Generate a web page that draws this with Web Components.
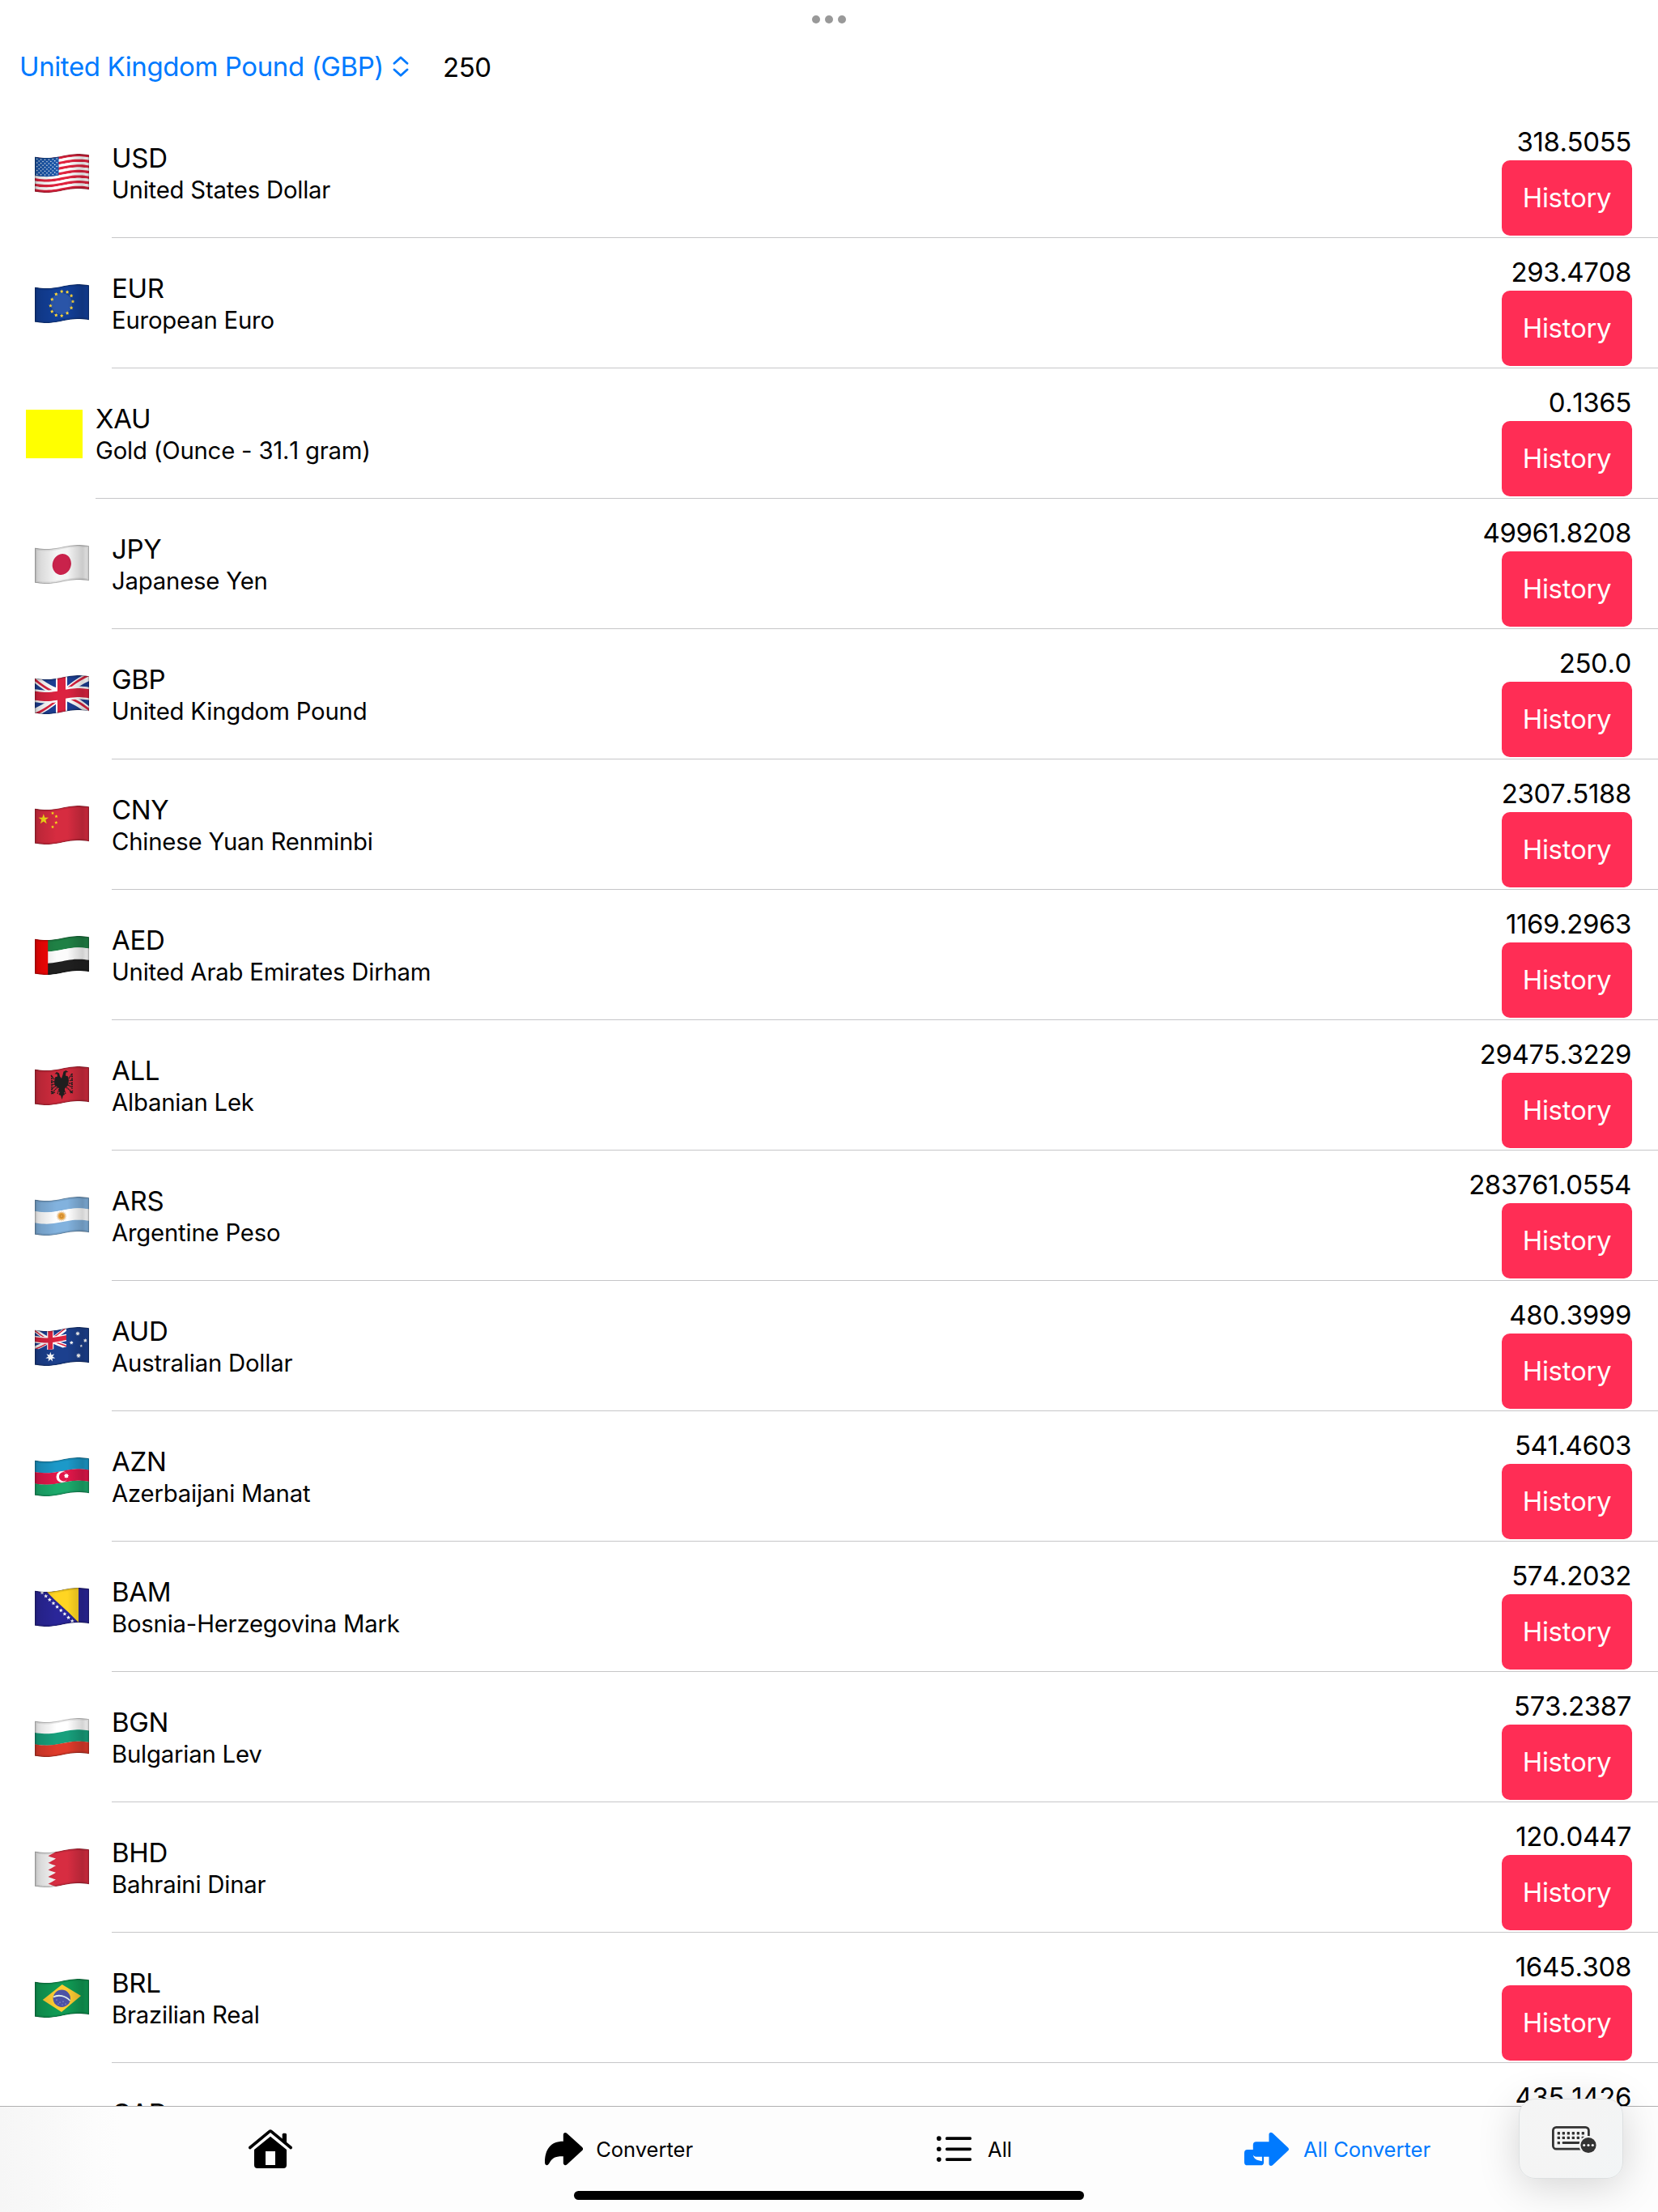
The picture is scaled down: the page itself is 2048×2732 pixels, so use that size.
<!DOCTYPE html>
<html lang="en">
<head>
<meta charset="utf-8">
<title>All Converter</title>
<style>
    html, body{margin: 0;height: 100%;background: #fff;}
    body{font-family: Inter, "Liberation Sans", sans-serif;color: #000;overflow: hidden;}
</style>
</head>
<body>
<converter-app></converter-app>

<script>
// ---------- flags ----------
const FLAG_W = 67;
const FLAG_H = 43;

// vertical offset of the cloth at x
function wave(x) {
    return 2.5 + 2.5 * Math.cos((x - 14) / 40 * Math.PI);
}

// polygon that follows the wave
function cloth(points, fill) {
    let out = [];
    for (let i = 0; i < points.length; i++) {
        let [x1, y1] = points[i];
        let [x2, y2] = points[(i + 1) % points.length];
        let steps = Math.max(1, Math.ceil(Math.abs(x2 - x1) / 3));
        for (let s = 0; s < steps; s++) {
            let x = x1 + (x2 - x1) * s / steps;
            let y = y1 + (y2 - y1) * s / steps;
            out.push(x.toFixed(2) + "," + (y + wave(x)).toFixed(2));
        }
    }
    return `<polygon points="${out.join(" ")}" fill="${fill}"/>`;
}

function box(x, y, w, h, fill) {
    return cloth([[x, y], [x + w, y], [x + w, y + h], [x, y + h]], fill);
}

function star(cx, cy, r, fill, n = 5, inner = 0.4) {
    let pts = [];
    for (let i = 0; i < n * 2; i++) {
        let a = Math.PI * i / n - Math.PI / 2;
        let k = i % 2 ? r * inner : r;
        pts.push((cx + k * Math.cos(a)).toFixed(2) + "," + (cy + k * Math.sin(a)).toFixed(2));
    }
    return `<polygon points="${pts.join(" ")}" fill="${fill}"/>`;
}

function bands(colors, x = 0) {
    let h = FLAG_H / colors.length;
    return colors.map((c, i) => box(x, i * h, FLAG_W - x, h + 0.1, c)).join("");
}

function unionJack(w, h) {
    let sx = w / 67, sy = h / 43;
    let p = (pts, c) => cloth(pts.map(([x, y]) => [x * sx, y * sy]), c);
    return p([[0, 0], [67, 0], [67, 43], [0, 43]], "#1d3f94")
        + p([[0, 0], [8, 0], [67, 37], [67, 43], [59, 43], [0, 6]], "#fff")
        + p([[67, 0], [59, 0], [0, 37], [0, 43], [8, 43], [67, 6]], "#fff")
        + p([[0, 0], [22, 14], [17, 14], [0, 3.5]], "#dc2340")
        + p([[67, 0], [62, 0], [40, 14], [45, 14]], "#dc2340")
        + p([[67, 43], [67, 39.5], [49, 29], [44, 29]], "#dc2340")
        + p([[0, 43], [5, 43], [27, 29], [22, 29]], "#dc2340")
        + p([[26, 0], [40, 0], [40, 43], [26, 43]], "#fff")
        + p([[0, 13.5], [67, 13.5], [67, 29.5], [0, 29.5]], "#fff")
        + p([[28, 0], [38, 0], [38, 43], [28, 43]], "#dc2340")
        + p([[0, 16], [67, 16], [67, 27], [0, 27]], "#dc2340");
}

const FLAGS = {
    us() {
        let s = "";
        for (let i = 0; i < 13; i++) s += box(0, i * FLAG_H / 13, FLAG_W, FLAG_H / 13 + 0.05, i % 2 ? "#fff" : "#e0233e");
        s += box(0, 0, 29.5, FLAG_H / 13 * 7, "#1d58aa");
        for (let r = 0; r < 9; r++)
            for (let c = r % 2; c < 11; c += 2)
                s += `<circle cx="${2.7 + c * 2.45}" cy="${2.3 + r * 2.35 + wave(2.7 + c * 2.45)}" r=".72" fill="#fff"/>`;
        return s;
    },
    eu() {
        let s = box(0, 0, FLAG_W, FLAG_H, "#123f98") + `<circle cx="33" cy="24" r="13" fill="#2a55a8"/>`;
        for (let i = 0; i < 12; i++) {
            let a = i * Math.PI / 6;
            let x = 33.2 + 13.8 * Math.sin(a);
            s += star(x, 24 - 15 * Math.cos(a) - 2.6 * Math.sin(a), 2.4, "#fbd43a", 5, 0.5);
        }
        return s;
    },
    jp() {
        return box(0, 0, FLAG_W, FLAG_H, "#f4f4f4")
            + `<ellipse cx="33.3" cy="24" rx="11.4" ry="13.1" fill="#c9224b" transform="rotate(18 33.3 24)"/>`;
    },
    gb() { return unionJack(67, 43); },
    cn() {
        return box(0, 0, FLAG_W, FLAG_H, "#d62c40")
            + star(10.8, 16.8, 6.6, "#f7e017") + star(22, 9.3, 2.1, "#f7e017", 5, 0.5) + star(26.5, 13.3, 2.1, "#f7e017", 5, 0.5)
            + star(26.3, 21, 2.1, "#f7e017", 5, 0.5) + star(22, 26.3, 2.1, "#f7e017", 5, 0.5);
    },
    ae() { return bands(["#1f8145", "#fbfbfb", "#202020"], 16) + box(0, 0, 16.2, FLAG_H, "#f60505"); },
    al() {
        return box(0, 0, FLAG_W, FLAG_H, "#cf2b3d") + `<g stroke="#1e1e1e" fill="none" stroke-width="1.3">
            <path fill="#1e1e1e" stroke="none" d="M33 15l-2-2.5-1-4-3-1.5-2.5 2.5 3 0 .5 3-3 1-1 6 1 4 5 4 0 4 2 1.5h3l2-1.5 0-4 4-4 1-6-1-5-3-1 .5-4 3-.5-3-2-3 1.5-1 4z"/>
            <path d="M24 16l-4-5M24 19h-4M25 22l-5 1M26 24l-5 4M28 26l-6 6M30 28l-2 6M42 15l4-6M43 18l4-2M42 21l5 0M41 23l5 3M39 26l6 5M36 28l2 6" stroke-dasharray="1.8 .5"/>
            <path d="M21 12v19M46 9v19" stroke-width="2" stroke-dasharray="1.3 1.3"/>
            <path d="M20 31l3 3M47 30l-3 3M20 34l5-2M47 33l-4-2"/>
            <path fill="#1e1e1e" stroke="none" d="M32 29h3l2 6-2 1-1.5 5-1.5-5-2.5-1z"/></g>`;
    },
    ar() {
        return bands(["#82b2de", "#fff", "#82b2de"]) + star(33, 24, 6.6, "#e9c9a0", 16, 0.75)
            + `<circle cx="33" cy="24" r="3.9" fill="#e9a23a"/><circle cx="33" cy="24" r="2" fill="none" stroke="#b9772a" stroke-width=".8"/>`;
    },
    au() {
        return box(0, 0, FLAG_W, FLAG_H, "#1c408e") + unionJack(39, 23)
            + star(19.3, 37, 6.2, "#fff", 7, 0.45) + star(53, 8, 3, "#fff", 7, 0.5) + star(45.3, 19.3, 2.6, "#fff", 7, 0.5)
            + star(62.3, 16.7, 2.6, "#fff", 7, 0.5) + star(57.3, 23.3, 1.8, "#fff", 5, 0.5) + star(54, 35.3, 3.2, "#fff", 7, 0.5);
    },
    az() {
        return bands(["#1c99c9", "#e2174a", "#1caa6c"])
            + `<circle cx="33.5" cy="24" r="7" fill="#fff"/><circle cx="35.6" cy="23.7" r="5.7" fill="#e2174a"/>` + star(39, 22.8, 3.3, "#fff", 8, 0.6);
    },
    ba() {
        let s = box(0, 0, FLAG_W, FLAG_H, "#2a2699") + cloth([[15, 0], [54, 0], [54, 43]], "#ffd522");
        for (let i = 0; i < 9; i++) s += star(9 + i * 4.65, 6 + i * 4.4, 2.6, "#fff", 5, 0.45);
        return s;
    },
    bg() { return bands(["#fff", "#17a07c", "#df3b2b"]); },
    bh() {
        let pts = [[FLAG_W, 0], [26, 0]];
        for (let i = 0; i < 5; i++) pts.push([16.5, (i + 0.5) * FLAG_H / 5], [26, (i + 1) * FLAG_H / 5]);
        pts.push([FLAG_W, FLAG_H]);
        return box(0, 0, FLAG_W, FLAG_H, "#f4f4f4") + cloth(pts, "#d72d41");
    },
    br() {
        return box(0, 0, FLAG_W, FLAG_H, "#109a54")
            + `<polygon points="9.7,26 33.7,7 57,21 33,41" fill="#fccb32"/>
            <circle cx="33.3" cy="24.3" r="10.7" fill="#4c53a6"/>
            <path d="M23 22.5C29 19 38 21 43.5 27" fill="none" stroke="#dff0ea" stroke-width="1.8"/>
            <g fill="#c9cdf0"><circle cx="27" cy="26" r=".6"/><circle cx="31" cy="29" r=".6"/><circle cx="35" cy="28" r=".6"/><circle cx="38" cy="31" r=".6"/><circle cx="29" cy="31" r=".5"/><circle cx="34" cy="32" r=".5"/></g>`;
    }
};

class FlagIcon extends HTMLElement {
    constructor() {
        super();
        this.attachShadow({ mode: 'open' });
    }
    connectedCallback() {
        let code = this.getAttribute("code");
        let outline = cloth([[0, 0], [FLAG_W, 0], [FLAG_W, FLAG_H], [0, FLAG_H]], "#000").match(/points="([^"]+)"/)[1];
        this.shadowRoot.innerHTML = `
            <style>
                :host{display: block;width: 67px;height: 48px;}
                svg{display: block;}
            </style>
            <svg width="67" height="48" viewBox="0 0 67 48">
                <defs>
                    <clipPath id="c"><polygon points="${outline}"/></clipPath>
                    <linearGradient id="g">
                        <stop offset="0" stop-opacity=".18"/>
                        <stop offset=".12" stop-opacity=".1"/>
                        <stop offset=".4" stop-opacity="0"/>
                        <stop offset=".6" stop-opacity="0"/>
                        <stop offset=".88" stop-opacity=".17"/>
                        <stop offset="1" stop-opacity=".06"/>
                    </linearGradient>
                </defs>
                <g clip-path="url(#c)">
                    ${FLAGS[code]()}
                    <rect width="67" height="48" fill="url(#g)"/>
                    <polygon points="${outline}" fill="none" stroke="#000" stroke-opacity=".08" stroke-width="5"/>
                    <polygon points="${outline}" fill="none" stroke="#000" stroke-opacity=".2" stroke-width="2"/>
                </g>
            </svg>`;
    }
}
customElements.define('flag-icon', FlagIcon);

// ---------- history button ----------
const history_button = document.createElement('template');
history_button.innerHTML = `
    <style>
        :host{display: flex;align-items: center;justify-content: center;box-sizing: border-box;width: 161px;height: 93px;padding-bottom: 2px;border-radius: 10px;background: #ff2d55;color: #fff;font-size: 33px;line-height: 40px;letter-spacing: var(--ls-body);}
    </style>
    <slot></slot>
`;

class HistoryButton extends HTMLElement {
    constructor() {
        super();
        this.attachShadow({ mode: 'open' });
        this.shadowRoot.appendChild(history_button.content.cloneNode(true));
    }
}
customElements.define('history-button', HistoryButton);

// ---------- currency row ----------
const currency_row = document.createElement('template');
currency_row.innerHTML = `
    <style>
        :host{display: flex;height: 161px;flex: none;padding-left: 32px;}
        .icon{flex: none;box-sizing: border-box;width: 90px;padding-right: 1px;margin-right: 16px;display: flex;align-items: center;justify-content: center;}
        .icon.gold{width: 70px;padding: 0;}
        .gold i{display: block;width: 70px;height: 60px;background: #ff0;}
        .content{flex: 1;display: flex;justify-content: space-between;border-bottom: 1px solid #c6c6c8;padding-right: 32px;}
        .names{padding-top: 42px;}
        .code{font-size: 33px;line-height: 40px;letter-spacing: var(--ls-body);}
        .name{font-size: 29.3px;line-height: 36px;margin-top: 2px;letter-spacing: var(--ls-sub);}
        :host([flag="gold"]) .name{font-kerning: none;}
        .right{display: flex;flex-direction: column;align-items: flex-end;justify-content: flex-end;padding-bottom: 2px;}
        .value{font-size: 33px;line-height: 40px;margin-bottom: 3px;padding-right: 1px;font-kerning: none;letter-spacing: var(--ls-num);}
    </style>
    <div class="icon"></div>
    <div class="content">
        <div class="names">
            <div class="code"></div>
            <div class="name"><slot></slot></div>
        </div>
        <div class="right">
            <div class="value"></div>
            <history-button>History</history-button>
        </div>
    </div>
`;

class CurrencyRow extends HTMLElement {
    constructor() {
        super();
        this.attachShadow({ mode: 'open' });
        this.shadowRoot.appendChild(currency_row.content.cloneNode(true));
    }
    connectedCallback() {
        let icon = this.shadowRoot.querySelector('.icon');
        let flag = this.getAttribute("flag");
        if (flag == "gold") {
            icon.classList.add("gold");
            icon.innerHTML = "<i></i>";
        } else if (flag) {
            icon.innerHTML = `<flag-icon code="${flag}"></flag-icon>`;
        }
        this.shadowRoot.querySelector('.code').textContent = this.getAttribute("code");
        this.shadowRoot.querySelector('.value').textContent = this.getAttribute("value");
    }
}
customElements.define('currency-row', CurrencyRow);

// ---------- header ----------
const converter_header = document.createElement('template');
converter_header.innerHTML = `
    <style>
        :host{display: block;height: 133px;flex: none;}
        .dots{display: flex;justify-content: center;gap: 6px;padding-top: 19px;height: 10px;}
        .dots i{width: 10px;height: 10px;border-radius: 50%;background: #999;}
        .bar{display: flex;align-items: center;padding: 31px 0 0 24px;font-size: 33px;line-height: 42px;}
        .picker{color: #007aff;letter-spacing: -.4px;width: 461px;white-space: nowrap;}
        svg{display: block;}
        .amount{margin-left: 42px;padding-top: 2px;letter-spacing: -.5px;}
    </style>
    <div class="dots"><i></i><i></i><i></i></div>
    <div class="bar">
        <span class="picker"><slot></slot></span>
        <svg width="20" height="26" viewBox="0 0 20 26" fill="none" stroke="#007aff" stroke-width="2.8" stroke-linecap="round" stroke-linejoin="round"><path d="M2 9.3L10 2l8 7.3M2 17l8 7.3L18 17"/></svg>
        <span class="amount"></span>
    </div>
`;

class ConverterHeader extends HTMLElement {
    constructor() {
        super();
        this.attachShadow({ mode: 'open' });
        this.shadowRoot.appendChild(converter_header.content.cloneNode(true));
    }
    connectedCallback() {
        this.shadowRoot.querySelector('.amount').textContent = this.getAttribute("amount");
    }
}
customElements.define('converter-header', ConverterHeader);

// ---------- tab bar ----------
const ICONS = {
    home: `<svg width="54" height="48" viewBox="0 0 54 48"><path d="M1.8 22.5L25.8 2.7q1.2-1 2.4 0L52.2 22.5" fill="none" stroke="currentColor" stroke-width="3.6" stroke-linecap="round"/><path d="M41.7 13V6.2q0-1.5 1.5-1.5h2.3q1.5 0 1.5 1.5V18z" fill="currentColor"/><path fill="currentColor" fill-rule="evenodd" d="M27 8.7L47 25v19q0 4-4 4H11q-4 0-4-4V25zM21 27v17h12V27z"/></svg>`,
    forward: `<svg width="49" height="42" viewBox="0 0 49 42"><path fill="currentColor" d="M23.7 3C23.7 0 26.5-.8 28.5 1.2L48 19c1.3 1.3 1.3 2.7 0 4L28.5 41c-2 1.8-4.8 1-4.8-2v-8.3C13 30.5 9.5 33 6.3 38.5 5 41 4 42 2.5 42 .8 42 0 40.5 0 38.5 0 22 7 11.3 23.7 11.3z"/></svg>`,
    list: `<svg width="46" height="34" viewBox="0 0 46 34"><g fill="currentColor"><circle cx="3" cy="3.3" r="3"/><circle cx="3" cy="17.3" r="3"/><circle cx="3" cy="31" r="3"/></g><path d="M13.5 3.3H44M13.5 17.3H44M13.5 31H44" stroke="currentColor" stroke-width="4" stroke-linecap="round"/></svg>`,
    double: `<svg width="56" height="43" viewBox="0 0 56 43"><path fill="currentColor" fill-rule="evenodd" d="M31 3c0-3 2.8-3.5 4.8-1.7L55 19.5c1.3 1.3 1.3 2.5 0 3.8L35.8 41.3c-2 1.8-4.8 1-4.8-1.8V31H24.5v6.7q0 4-4 4H4q-4 0-4-4V26q0-4 4-4h7V16q0-4 4-4H31zM11 28.5c1 5.5 5 6.5 11.3 8V31H16c-2.5 0-4-1-5-2.5z"/></svg>`
};

class TabItem extends HTMLElement {
    constructor() {
        super();
        this.attachShadow({ mode: 'open' });
    }
    connectedCallback() {
        this.shadowRoot.innerHTML = `
            <style>
                :host{display: flex;align-items: center;flex: none;font-size: 25.5px;line-height: 32px;letter-spacing: var(--ls-tab);white-space: nowrap;}
                :host([active]){color: #007aff;}
                svg{display: block;}
                span{padding-top: 2px;}
            </style>
            ${ICONS[this.getAttribute("icon")]}<span><slot></slot></span>`;
    }
}
customElements.define('tab-item', TabItem);

const tab_bar = document.createElement('template');
tab_bar.innerHTML = `
    <style>
        :host{display: flex;align-items: flex-start;flex: none;height: 130px;border-top: 1px solid #b0b0b1;position: relative;background: linear-gradient(90deg, #f6f6f6, #f9f9f9 70px, #fcfcfc 116px, #fdfdfd 150px);}
        nav{display: flex;align-items: center;height: 104px;padding-left: 307px;}
        .indicator{position: absolute;left: 709px;bottom: 15px;width: 630px;height: 11px;border-radius: 6px;background: #000;}
    </style>
    <nav><slot></slot></nav>
    <div class="indicator"></div>
`;

class TabBar extends HTMLElement {
    constructor() {
        super();
        this.attachShadow({ mode: 'open' });
        this.shadowRoot.appendChild(tab_bar.content.cloneNode(true));
    }
}
customElements.define('tab-bar', TabBar);

// ---------- floating keyboard button ----------
class KeyboardButton extends HTMLElement {
    constructor() {
        super();
        this.attachShadow({ mode: 'open' });
        let keys = "";
        for (let y of [8.7, 14.3])
            for (let i = 0; i < 6; i++) keys += `<rect x="${6.7 + i * 6}" y="${y - 1.6}" width="3.3" height="3.3" rx=".6"/>`;
        this.shadowRoot.innerHTML = `
            <style>
                :host{position: absolute;right: 43px;bottom: 41px;width: 127px;height: 97px;border: 1px solid #dde0e1;border-radius: 20px;background: linear-gradient(120deg, #f4f5f5, #f4f4f4 50%, #f2f5f6);box-shadow: 0 8px 50px rgba(0,0,0,.17);display: flex;align-items: center;justify-content: center;}
                svg{display: block;margin: 2px 0 0 8px;}
            </style>
            <svg width="56" height="34" viewBox="0 0 56 34" fill="#333">
                <rect x="1.4" y="1.4" width="44" height="26.8" rx="4" fill="none" stroke="#333" stroke-width="2.8"/>
                ${keys}
                <rect x="6.7" y="19" width="3.3" height="3.3" rx=".6"/>
                <rect x="12.7" y="19" width="22" height="3" rx="1"/>
                <circle cx="45" cy="23.5" r="11.5" fill="#f4f4f4"/>
                <circle cx="45" cy="23.5" r="9.6"/>
                <g fill="#f4f4f4"><circle cx="39.7" cy="23.5" r="1.6"/><circle cx="45" cy="23.5" r="1.6"/><circle cx="50.3" cy="23.5" r="1.6"/></g>
            </svg>`;
    }
}
customElements.define('keyboard-button', KeyboardButton);

// ---------- app ----------
const CURRENCIES = [
    ["us", "USD", "United States Dollar", "318.5055"],
    ["eu", "EUR", "European Euro", "293.4708"],
    ["gold", "XAU", "Gold (Ounce - 31.1 gram)", "0.1365"],
    ["jp", "JPY", "Japanese Yen", "49961.8208"],
    ["gb", "GBP", "United Kingdom Pound", "250.0"],
    ["cn", "CNY", "Chinese Yuan Renminbi", "2307.5188"],
    ["ae", "AED", "United Arab Emirates Dirham", "1169.2963"],
    ["al", "ALL", "Albanian Lek", "29475.3229"],
    ["ar", "ARS", "Argentine Peso", "283761.0554"],
    ["au", "AUD", "Australian Dollar", "480.3999"],
    ["az", "AZN", "Azerbaijani Manat", "541.4603"],
    ["ba", "BAM", "Bosnia-Herzegovina Mark", "574.2032"],
    ["bg", "BGN", "Bulgarian Lev", "573.2387"],
    ["bh", "BHD", "Bahraini Dinar", "120.0447"],
    ["br", "BRL", "Brazilian Real", "1645.308"],
    ["", "CAD", "", "435.1426"]
];

class ConverterApp extends HTMLElement {
    constructor() {
        super();
        this.attachShadow({ mode: 'open' });
        this.shadowRoot.innerHTML = `
            <style>
                :host{display: flex;flex-direction: column;position: relative;width: 2048px;height: 2732px;overflow: hidden;--ls-body: -.3px;--ls-sub: -.2px;--ls-num: -.4px;--ls-tab: 0px;}
                main{flex: 1;min-height: 0;overflow: hidden;display: flex;flex-direction: column;}
                .converter{width: 183px;gap: 16px;margin-left: 312px;}
                .all{width: 93px;gap: 20px;margin-left: 301px;}
                .all-converter{width: 230px;gap: 18px;margin-left: 287px;}
            </style>
            <converter-header amount="250">United Kingdom Pound (GBP)</converter-header>
            <main>
                ${CURRENCIES.map(([flag, code, name, value]) => `<currency-row flag="${flag}" code="${code}" value="${value}">${name}</currency-row>`).join("")}
            </main>
            <tab-bar>
                <tab-item icon="home"></tab-item>
                <tab-item class="converter" icon="forward">Converter</tab-item>
                <tab-item class="all" icon="list">All</tab-item>
                <tab-item class="all-converter" icon="double" active>All Converter</tab-item>
            </tab-bar>
            <keyboard-button></keyboard-button>`;
    }
}
customElements.define('converter-app', ConverterApp);
</script>
</body>
</html>
